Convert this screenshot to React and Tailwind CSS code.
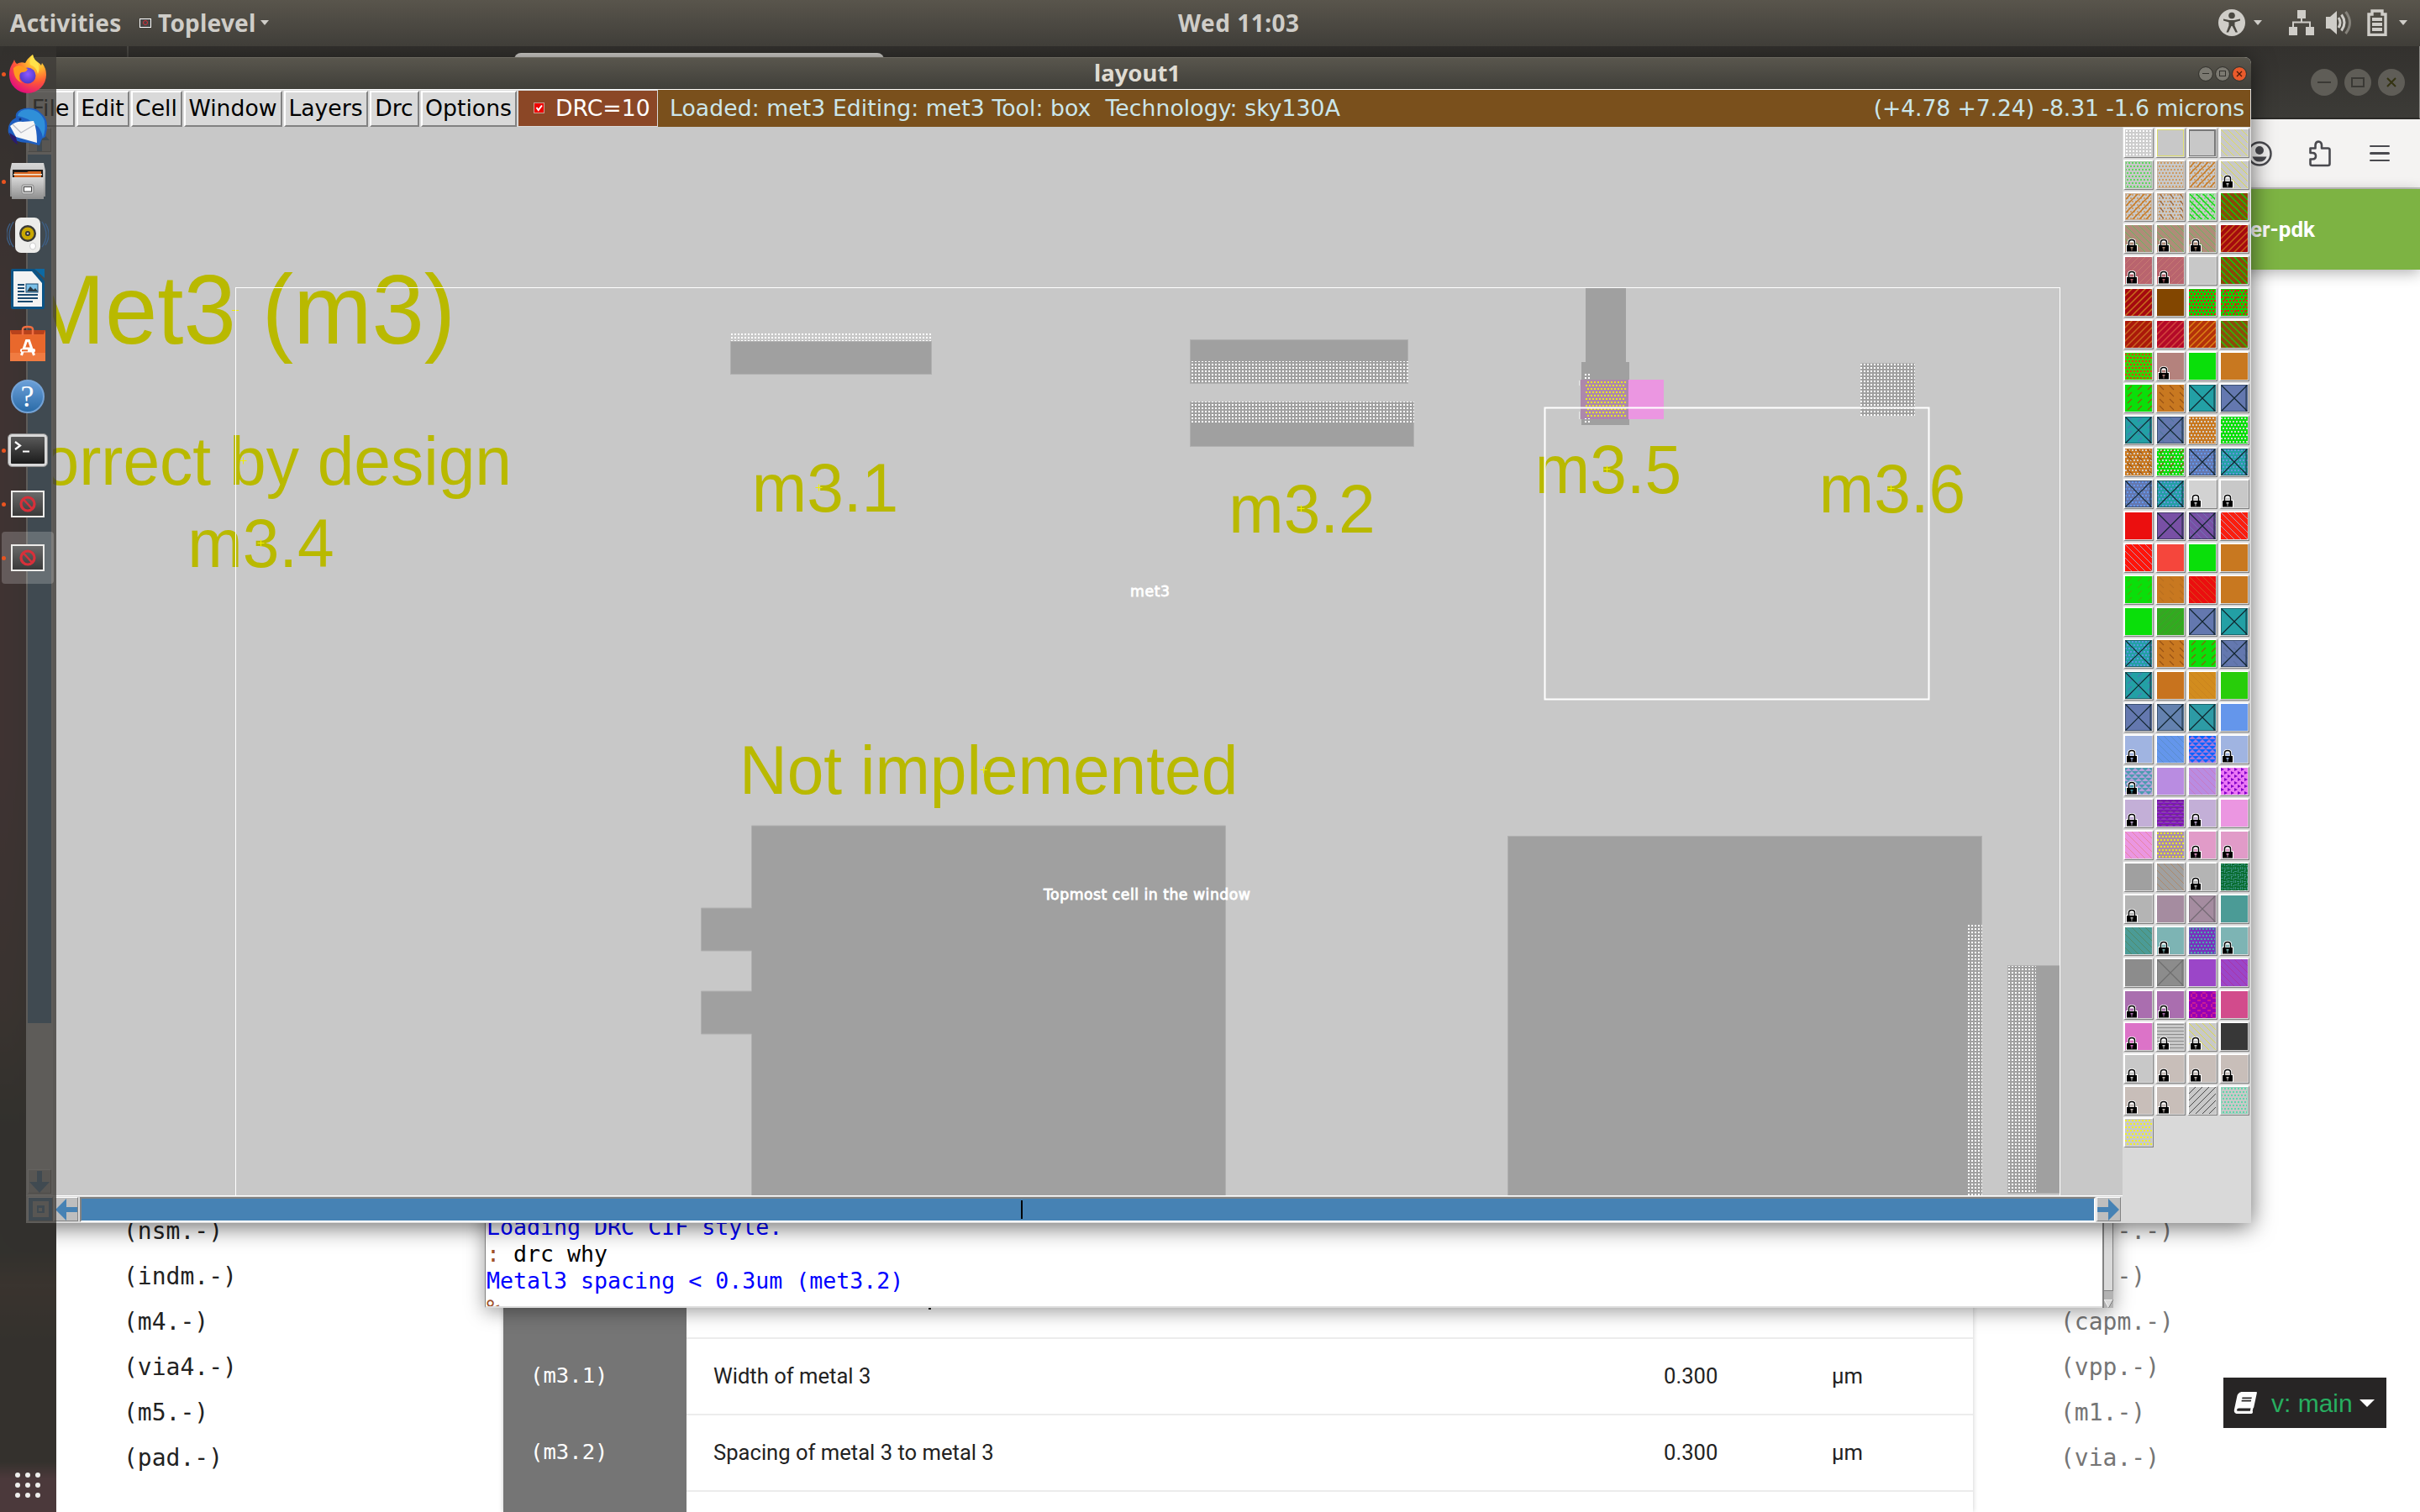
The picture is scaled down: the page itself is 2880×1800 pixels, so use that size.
import React, { useId } from "react";
import { FaBook } from "react-icons/fa";

const G = "#c8c8c8";
const GREEN = "#0adf0a";
const ORANGE = "#c87820";
const TEAL = "#23a0a5";
const SLATE = "#6478af";

/* One palette entry: background colour plus optional stipple layers. */
const s = (bg, layers = [], o = {}) => ({ bg, layers, ...o });
const L = { lock: true };
const X = { cross: "#10242c" };

const PALETTE = [
  s("#cdcdcd", [["grid", "#ffffff"]]),
  s(G, [], { outline: "#dcdc6e" }),
  s(G, [], { outline: "#787878", heavy: true }),
  s(G, [["down", "#e1e14b"]]),

  s(G, [["dots", "#5fd75f"]], { outline: "#a0c8a0" }),
  s(G, [["dots", "#cd9b64"]], { outline: "#c8b4a0" }),
  s(G, [["dots", "#cda06e"], ["up2", ORANGE]], { outline: "#c8b4a0" }),
  s(G, [["down", "#dcdc3c"]], L),

  s(G, [["dots", "#cda06e"], ["up2", ORANGE]], { outline: "#c8b4a0" }),
  s(G, [["dots", "#cd9b64"], ["dashDown", "#96643c"]], { outline: "#c8b4a0" }),
  s(G, [["dots", "#78dc78"], ["down2", GREEN]], { outline: "#a0dca0" }),
  s("#8c460a", [["down2", "#0ad20a"]]),

  s("#af8c78", [["down", "#5fbe5f"]], L),
  s("#af8c78", [["down", "#5fbe5f"]], L),
  s("#af8c78", [["down", "#5fbe5f"]], L),
  s("#a50a0f", [["up2", "#c85f14"]]),

  s("#b9646e", [["up", "#c87d73"]], L),
  s("#b9646e", [["up", "#c87d73"]], L),
  s(G),
  s("#8c460a", [["down2", "#0ad20a"]]),

  s("#a50a0f", [["up2", "#c86e1e"]]),
  s("#824600"),
  s("#14cd0a", [["dots", "#eb1914"]]),
  s("#14cd0a", [["dots", "#eb1914"], ["dashUp", "#a0460a"]]),

  s("#aa190a", [["up2", "#c8641e"]]),
  s("#b40a28", [["up2", "#d2463c"]]),
  s("#b4320a", [["up2", "#dc8214"]]),
  s("#8c4b0a", [["down2", "#28be0a"]]),

  s("#37d20a", [["dots", "#e13c14"]]),
  s("#b4827d", [], L),
  s(GREEN),
  s(ORANGE),

  s(GREEN, [["dashUp", "#8c5a0a"]]),
  s(ORANGE, [["dashDown", "#965014"]]),
  s(TEAL, [], X),
  s(SLATE, [], X),

  s(TEAL, [["dashUp", "#4678b4"]], X),
  s(SLATE, [["dashDown", "#5078a0"]], X),
  s(ORANGE, [["dots", "#d7cdc3"]]),
  s(GREEN, [["dots", "#c8dcc8"]]),

  s(ORANGE, [["dots", "#d7cdc3"], ["dashDown", "#965014"]]),
  s(GREEN, [["dots", "#c8dcc8"], ["dashUp", "#8c5a0a"]]),
  s(SLATE, [["dots", "#6496eb"]], X),
  s(TEAL, [["dots", "#6496dc"]], X),

  s(SLATE, [["dots", "#6496eb"]], X),
  s(TEAL, [["dots", "#6496dc"]], X),
  s("#d2d2d2", [], L),
  s("#c8c8c8", [], L),

  s("#eb0f0f"),
  s("#7850a5", [], X),
  s("#7850a5", [["down", "#6e78b4"]], X),
  s("#fa1e0f", [["down", "#b4aabe"]]),

  s("#ff140a", [["down", "#b4aabe"]]),
  s("#f5463c"),
  s(GREEN),
  s(ORANGE),

  s(GREEN, [["dashUp", "#3cb40a"]]),
  s(ORANGE, [["dashDown", "#b96e1e"]]),
  s("#eb0f0f", [["down", "#d2551e"]]),
  s(ORANGE),

  s(GREEN),
  s("#37a523", [["up", "#1ebe14"]]),
  s(SLATE, [], X),
  s(TEAL, [], X),

  s(TEAL, [["dots", "#5a96e1"]], X),
  s(ORANGE, [["dashDown", "#965014"]]),
  s(GREEN, [["dashUp", "#8c5a0a"]]),
  s(SLATE, [["dashDown", "#5a6ea0"]], X),

  s(TEAL, [["dashUp", "#4678b4"]], X),
  s("#c8731e"),
  s("#d28c1e", [["down", "#c8821e"]]),
  s("#28cd0a"),

  s(SLATE, [], X),
  s("#6482af", [], X),
  s("#2d9ba5", [], X),
  s("#6496eb"),

  s("#a0b4e1", [], L),
  s("#6496eb", [["down", "#5a8cc8"]]),
  s("#0a64ff", [["tri", "#a078dc"]]),
  s("#a0b4e1", [], L),

  s("#4b9baf", [["tri", "#b4a0dc"]], L),
  s("#b98ce1"),
  s("#b98ce1", [["down", "#c878be"]]),
  s("#eb78f5", [["triSide", "#8200c8"]]),

  s("#c3afd7", [], L),
  s("#820ac8", [["tri", "#8c3cb4"], ["lines", "#6e3282"]]),
  s("#c3afd7", [], L),
  s("#eb96e1"),

  s("#eb96e1", [["down", "#e6829b"]]),
  s("#aa8caa", [["dots", "#e6e628"]]),
  s("#e19bc8", [], L),
  s("#e19bc8", [], L),

  s("#a0a0a0"),
  s("#a0a0a0", [["down", "#af8764"]]),
  s("#b4b4b4", [], L),
  s("#0a6e32", [["weave", "#3c9182"]]),

  s("#b4b4b4", [], L),
  s("#a58ca0"),
  s("#a58ca0", [], { cross: "#736973" }),
  s("#4b9b96"),

  s("#4b9b96", [["down", "#508764"]]),
  s("#7db4b4", [], L),
  s("#7832be", [["dots", "#4baaaa"]], { outline: "#6464b4" }),
  s("#7db4b4", [], L),

  s("#8c8c8c"),
  s("#8c8c8c", [], { cross: "#6e6e6e" }),
  s("#9b46c8"),
  s("#9b46c8", [["down", "#aa32a0"]]),

  s("#aa6eaf", [], L),
  s("#aa6eaf", [], L),
  s("#9600b4", [["rings", "#c81e96"]]),
  s("#d24b8c"),

  s("#dc73c8", [], L),
  s(G, [["lines", "#8c8c8c"]], L),
  s(G, [["down", "#dcdc3c"]], L),
  s("#373737"),

  s("#c8c8c8", [], L),
  s("#c8beb9", [], L),
  s("#c8beb9", [], L),
  s("#c8beb9", [], L),

  s("#c8beb9", [], L),
  s("#c8beb9", [], L),
  s(G, [["up", "#3c3c3c"]]),
  s(G, [["dots", "#5fd7aa"]], { outline: "#96d2be" }),

  s(G, [["dots", "#f0f028"]]),
];

const UP = "M-2 2l4-4M0 8l8-8M6 10l4-4";
const DOWN = "M0 0l8 8M-2 6l4 4M6-2l4 4";

const STIPPLES = {
  grid: { w: 4, h: 4, draw: (c) => <rect x="1" y="1" width="2" height="2" fill={c} /> },
  dots: { w: 4, h: 8, draw: (c) => <path d="M0 1h2v2h-2zM2 5h2v2h-2z" fill={c} /> },
  up: { w: 8, h: 8, draw: (c) => <path d={UP} stroke={c} strokeWidth="0.9" /> },
  up2: { w: 8, h: 8, draw: (c) => <path d={UP} stroke={c} strokeWidth="1.5" /> },
  down: { w: 8, h: 8, draw: (c) => <path d={DOWN} stroke={c} strokeWidth="0.9" /> },
  down2: { w: 8, h: 8, draw: (c) => <path d={DOWN} stroke={c} strokeWidth="1.5" /> },
  dashUp: { w: 12, h: 8, draw: (c) => <path d="M3 6l5-5" stroke={c} strokeWidth="1.1" /> },
  dashDown: { w: 12, h: 8, draw: (c) => <path d="M3 1l5 5" stroke={c} strokeWidth="1.1" /> },
  tri: { w: 8, h: 8, draw: (c) => <path d="M0 4l4-4l4 4zM-4 8l4-4l4 4zM4 8l4-4l4 4z" fill={c} /> },
  triSide: { w: 8, h: 8, draw: (c) => <path d="M0 0l4 2l-4 2zM4 4l4 2l-4 2z" fill={c} /> },
  lines: { w: 4, h: 4, draw: (c) => <path d="M0 1.5h4" stroke={c} strokeWidth="1" /> },
  weave: { w: 8, h: 8, draw: (c) => <path d="M0 1h3v1h-3zM4 0h1v3h-1zM6 2h2v1h-2zM1 4h1v3h-1zM3 5h3v1h-3zM7 4h1v3h-1zM4 7h2v1h-2z" fill={c} /> },
  rings: { w: 12, h: 12, draw: (c) => <path d="M4 1h4v2h-4zM2 3h2v4h-2zM8 3h2v4h-2zM4 7h4v2h-4zM0 10h2v2h-2zM10 10h2v2h-2z" fill={c} /> },
};

function Stipple({ kind, color }) {
  const id = useId();
  const p = STIPPLES[kind];
  return (
    <>
      <pattern id={id} width={p.w} height={p.h} patternUnits="userSpaceOnUse">{p.draw(color)}</pattern>
      <rect width="32" height="32" fill={`url(#${id})`} />
    </>
  );
}

function Swatch({ spec }) {
  return (
    <div className="h-9 w-9 border-t-2 border-l-2 border-r border-b border-t-white border-l-white border-r-[#7f7f7f] border-b-[#7f7f7f] bg-[#d9d9d9]">
      <svg width="32" height="32" viewBox="0 0 32 32" className="block" fill="none">
        <rect width="32" height="32" fill={spec.bg} />
        {spec.layers.map(([kind, color], i) => <Stipple key={i} kind={kind} color={color} />)}
        {spec.outline && <rect x="0.5" y="0.5" width="31" height="31" stroke={spec.outline} />}
        {spec.heavy && <path d="M0 1.5h31M30.5 0v32" stroke={spec.outline} />}
        {spec.cross && (
          <>
            <path d="M0 0.5h32M0.5 0v32M31 0v32M0 31.5h32" stroke={spec.cross} strokeOpacity="0.45" />
            <path d="M30 1v31" stroke={spec.cross} strokeOpacity="0.4" strokeWidth="2" />
            <path d="M1 1l30 30M31 1L1 31" stroke={spec.cross} strokeWidth="1.1" />
          </>
        )}
        {spec.lock && (
          <g>
            <path d="M1 32V23h2v-3q0-4 5-4t5 4v3h2v9z" fill="#fff" />
            <path d="M2 31.500V24h12v7.500z" fill="#000" />
            <path d="M4.500 24v-3.500q0-3 3.500-3t3.500 3V24" stroke="#000" strokeWidth="1.5" fill="#fff" />
            <rect x="6" y="20.500" width="4" height="3" fill={spec.bg} />
            <path d="M6.500 26h3v1.500h-1v3h-1v-3h-1z" fill={spec.bg} />
          </g>
        )}
      </svg>
    </div>
  );
}

function Cross({ x, y }) {
  return <path d={`M${x - 4} ${y}h8M${x} ${y - 4}v8`} stroke="#f0f000" />;
}

function Label({ x, y, size = 78.5, anchor = "middle", children }) {
  return (
    <g transform={`translate(${x} ${y}) scale(1 1.04)`}>
      <text fontSize={size} textAnchor={anchor} fill="#b9b900" className="font-['Liberation_Sans',sans-serif]">{children}</text>
    </g>
  );
}

function Metal({ x, y, w, h }) {
  return <rect x={x + 0.5} y={y + 0.5} width={w - 1} height={h - 1} fill="#a0a0a0" stroke="#b0b0b0" />;
}

/* Mask layout drawing, in screen units. */
function LayoutCanvas() {
  return (
    <svg width="2463" height="1272" viewBox="63 151 2463 1272" className="block shrink-0" fill="none">
      <defs>
        <pattern id="err" x="2" y="1" width="4" height="4" patternUnits="userSpaceOnUse">
          <rect width="2" height="2" fill="#fff" />
        </pattern>
        <pattern id="via" x="3" y="2" width="4" height="8" patternUnits="userSpaceOnUse">
          <path d="M0 0h2v2h-2zM2 4h2v2h-2z" fill="#e6e628" />
        </pattern>
      </defs>
      <rect x="63" y="151" width="2463" height="1272" fill="#c8c8c8" />

      <rect x="870" y="396" width="238" height="11" fill="url(#err)" />
      <Metal x={869} y={406} w={240} h={40} />
      <Metal x={1416} y={404} w={260} h={53} />
      <rect x="1417" y="430" width="259" height="26" fill="url(#err)" />
      <Metal x={1416} y={478} w={267} h={54} />
      <rect x="1417" y="478" width="266" height="25" fill="url(#err)" />

      <path d="M1887 343h48v88h4v75h-57v-75h5z" fill="#a0a0a0" />
      <rect x="1938" y="452" width="42" height="47" fill="#eb96e1" />
      <rect x="1881" y="452" width="57" height="47" fill="#ad88ab" />
      <rect x="1887" y="452" width="48" height="46" fill="url(#via)" />
      <rect x="1886" y="445" width="6" height="7" fill="url(#err)" />
      <rect x="1886" y="498" width="6" height="7" fill="url(#err)" />
      <rect x="1879" y="453" width="1" height="6" fill="#e6e6e6" />
      <rect x="1879" y="490" width="1" height="9" fill="#e6e6e6" />

      <Metal x={2214} y={432} w={65} h={63} />
      <rect x="2214" y="432" width="65" height="63" fill="url(#err)" />

      <path d="M894.500 1430V1231h-60v-51h60v-48h-60v-51h60v-98h564v447z" fill="#a0a0a0" stroke="#b0b0b0" />
      <Metal x={1794} y={995} w={565} h={440} />
      <rect x="2342" y="1101" width="17" height="322" fill="url(#err)" />
      <Metal x={2389} y={1149} w={63} h={272} />
      <rect x="2390" y="1150" width="33" height="270" fill="url(#err)" />

      <Label x={542} y={409} size={112} anchor="end">Met3 (m3)</Label>
      <Label x={609} y={577} anchor="end">Correct by design</Label>
      <Label x={310.500} y={675}>m3.4</Label>
      <Label x={982} y={609}>m3.1</Label>
      <Label x={1549.500} y={634}>m3.2</Label>
      <Label x={1914} y={587}>m3.5</Label>
      <Label x={2252} y={610}>m3.6</Label>
      <Label x={880} y={945} anchor="start">Not implemented</Label>

      <path d="M276 369.500h8" stroke="#f0f000" />
      <Cross x={289.500} y={548.500} />
      <Cross x={310.500} y={646.500} />
      <Cross x={974.500} y={580.500} />
      <Cross x={1548.500} y={605.500} />
      <Cross x={1912.500} y={558.500} />
      <Cross x={2250.500} y={581.500} />
      <Cross x={1170.500} y={916.500} />

      <rect x="280.500" y="342.500" width="2171" height="1200" stroke="#fff" />
      <rect x="1838.500" y="485.500" width="457" height="347" stroke="#fff" strokeWidth="2" />

      <g fill="#fff" stroke="#fff" strokeWidth="0.8" fontSize="17.3" className="font-['DejaVu_Sans',sans-serif]">
        <text x="1345" y="710" textLength="47">met3</text>
        <text x="1242" y="1071" textLength="246">Topmost cell in the window</text>
      </g>
    </svg>
  );
}

function Firefox() {
  return (
    <svg width="46" height="46" viewBox="0 0 46 46">
      <defs>
        <radialGradient id="ffa" cx="0.75" cy="0.1" r="1">
          <stop offset="0" stopColor="#fff44f" /><stop offset="0.3" stopColor="#ffb02e" />
          <stop offset="0.6" stopColor="#ff5a36" /><stop offset="0.95" stopColor="#e3107a" />
        </radialGradient>
        <radialGradient id="ffb" cx="0.5" cy="0.4" r="0.6">
          <stop offset="0" stopColor="#9059ff" /><stop offset="1" stopColor="#4b39c8" />
        </radialGradient>
      </defs>
      <path d="M4 12q2-3 3-6q1 4 3 5q5-3 10-1Q23 4 29 0q1 6 6 9q3 2 4 4l1-3q5 6 5 14a22 22 0 0 1-44 0Q1 17 4 12z" fill="url(#ffa)" />
      <circle cx="23" cy="25" r="9.500" fill="url(#ffb)" />
      <path d="M6 16q5-5 10-2l7 3q-1 4-7 4q-3 1-3 4q-1 6 4 9q-11-4-11-18z" fill="#ff9a1f" />
      <path d="M29 0q-5 6-3 12q8 3 9 11q3-6 0-13q-5-4-6-10z" fill="#ffe24a" />
    </svg>
  );
}

function Thunderbird() {
  return (
    <svg width="48" height="48" viewBox="0 0 48 48">
      <path d="M10 12Q8 4 20 1q14-2 20 6q8 6 7 18l-2 10l-4 2l-3 8l-5-1l-8-2Q6 42 1 30Q-1 18 10 12z" fill="#1f5fc0" />
      <path d="M12 10Q14 2 25 2q14 1 19 14q2 10-2 20q-2-12-10-16q-8-8-20-10z" fill="#2f8fd8" />
      <path d="M3 22Q10 16 18 17l13-1q4 10 4 26L10 35z" fill="#f6f6f6" />
      <path d="M6 20l10 10L33 20" fill="none" stroke="#b9bcc4" strokeWidth="1.200" />
      <path d="M2 30q2 10 10 14l-2-9z" fill="#2a1b6e" />
      <circle cx="15" cy="14" r="1.500" fill="#12306b" />
    </svg>
  );
}

function Files() {
  return (
    <svg width="42" height="44" viewBox="0 0 42 44">
      <defs><linearGradient id="fil" x1="0" y1="0" x2="0" y2="1"><stop offset="0" stopColor="#d8d8d8" /><stop offset="1" stopColor="#8e8e8e" /></linearGradient></defs>
      <path d="M2 0h38l2 9v31H0V9z" fill="url(#fil)" />
      <rect x="3" y="8" width="36" height="10" fill="#1f1c1a" />
      <path d="M5 11h15l2-1h15v8H5z" fill="#d9651f" />
      <rect x="4" y="13" width="34" height="1.500" fill="#f3ead8" />
      <rect x="2" y="17" width="38" height="26" fill="url(#fil)" />
      <rect x="14" y="26" width="14" height="11" rx="2" fill="#c9c9c9" stroke="#8a8a8a" />
      <rect x="16.500" y="28.500" width="9" height="5.500" fill="#fff" stroke="#444" />
    </svg>
  );
}

function Rhythmbox() {
  return (
    <svg width="50" height="44" viewBox="0 0 50 44" fill="none">
      <path d="M8 6q-10 16 0 30M4 8q-8 13 0 26M42 6q10 16 0 30M46 8q8 13 0 26" stroke="#3d5f86" strokeWidth="1.400" />
      <rect x="10" y="1" width="30" height="42" rx="7" fill="#ececea" />
      <circle cx="25" cy="20" r="10" fill="#3a3a38" />
      <circle cx="25" cy="20" r="7.500" fill="#c9a800" />
      <circle cx="25" cy="20" r="3" fill="#333" /><circle cx="25" cy="20" r="1.300" fill="#bbb" />
      <ellipse cx="31" cy="35" rx="3.500" ry="4" fill="#fff" stroke="#ccc" />
    </svg>
  );
}

function Writer() {
  return (
    <svg width="40" height="48" viewBox="0 0 40 48" fill="none">
      <path d="M2 0h26l12 15v31q0 2-2 2H2q-2 0-2-2V2q0-2 2-2z" fill="#0b5486" />
      <path d="M28 0h12v11z" fill="#0d69a3" />
      <path d="M3 3h22l12 14v28H3z" fill="#f3f3f3" />
      <path d="M8 19h8M8 23h8M8 27h8M8 31h24M8 35h24M8 39h18" stroke="#1a4a70" strokeWidth="2" />
      <rect x="18" y="18" width="14" height="10" fill="#7cc0e8" stroke="#1a4a70" />
      <path d="M19 27l4-6l4 4l2-2l3 4z" fill="#2b3a44" />
    </svg>
  );
}

function Software() {
  return (
    <svg width="42" height="43" viewBox="0 0 42 43" fill="none">
      <path d="M0 6h42v37H0z" fill="#e9682c" />
      <path d="M0 6h42l-2 5H2z" fill="#b8421c" />
      <path d="M0 33h42v10H0z" fill="#f07b41" />
      <path d="M15 12V5q0-3 6-3t6 3v7" stroke="#ef6d40" strokeWidth="2.500" />
      <path d="M13.500 36L19.500 18.500h3L28.500 36M16 28h10" stroke="#fff" strokeWidth="3" />
      <rect x="12" y="28" width="18" height="4.500" rx="2" fill="#fff" />
      <rect x="14" y="29.300" width="7" height="2" fill="#e9682c" />
    </svg>
  );
}

function Help() {
  return (
    <div className="flex h-10 w-10 items-center justify-center rounded-full border-2 border-[#74a3d6] bg-gradient-to-b from-[#6a9fd8] to-[#2a6ca8] font-['Liberation_Serif',serif] text-[36px] leading-none text-white">?</div>
  );
}

function TerminalIcon() {
  return (
    <div className="flex h-[38px] w-[46px] rounded-sm border-[3px] border-[#d8d8d8] bg-gradient-to-b from-[#5a5a5a] to-[#1c1c1c] outline outline-[#8d8d8d]">
      <svg width="40" height="30" viewBox="0 0 40 30" fill="none">
        <path d="M5 6l6 4.500l-6 4.500M14 17.500h8" stroke="#fff" strokeWidth="2.200" />
      </svg>
    </div>
  );
}

function Forbidden() {
  return (
    <div className="flex h-8 w-10 items-center justify-center border-2 border-[#ecebe9] bg-gradient-to-b from-[#6a6a6a] to-[#3a3a3a]">
      <svg width="20" height="20" viewBox="0 0 20 20" fill="none">
        <circle cx="10" cy="10" r="8" stroke="#d8303a" strokeWidth="3.200" />
        <path d="M5 4.500l10 11" stroke="#d8303a" strokeWidth="2.600" />
      </svg>
    </div>
  );
}

const DOCK = [
  { icon: <Firefox />, running: true },
  { icon: <Thunderbird /> },
  { icon: <Files />, running: true },
  { icon: <Rhythmbox /> },
  { icon: <Writer /> },
  { icon: <Software /> },
  { icon: <Help /> },
  { icon: <TerminalIcon />, running: true },
  { icon: <Forbidden />, running: true },
  { icon: <Forbidden />, running: true, active: true },
];

function Dock() {
  return (
    <aside className="absolute top-[55px] left-0 flex h-[1745px] w-[67px] flex-col bg-[#3e3c38]/80 pt-px">
      {DOCK.map((d, i) => (
        <div key={i} className="relative flex h-16 w-full items-center justify-center">
          {d.active && <div className="absolute inset-x-0.5 inset-y-px right-[3px] rounded bg-white/20" />}
          {d.running && <div className="absolute left-0.5 h-[5px] w-[5px] rounded-full bg-[#e95420]" />}
          <div className="relative right-px">{d.icon}</div>
        </div>
      ))}
      <div className="mt-auto mb-[17px] ml-[18px] grid w-[30px] grid-cols-3 gap-[6px]">
        {Array.from({ length: 9 }, (_, i) => <div key={i} className="h-1.5 w-1.5 rounded-full bg-[#eeeeec]" />)}
      </div>
    </aside>
  );
}

function Caret() {
  return <svg width="10" height="6" viewBox="0 0 10 6"><path d="M0 0h10l-5 6z" fill="#cfcdc8" /></svg>;
}

function TopBar() {
  return (
    <header className="absolute inset-x-0 top-0 flex h-[55px] items-center bg-gradient-to-b from-[#59554c] to-[#403e39] pb-px font-['Noto_Sans',sans-serif] text-[28px] leading-[52px] font-bold text-[#cfcdc8]">
      <span className="ml-3 w-[154px] pb-px tracking-[0.25px]">Activities</span>
      <div className="flex h-[11px] w-[14px] items-center justify-center border border-white bg-[#444]">
        <div className="h-1.5 w-1.5 rounded-full border border-[#d8303a]" />
      </div>
      <span className="ml-2 pb-px tracking-[0.2px]">Toplevel</span>
      <div className="ml-[5px]"><Caret /></div>
      <span className="absolute left-[1402px] pb-px tracking-[0.5px]">Wed 11:03</span>
      <div className="mr-[15px] ml-auto flex items-center">
        <svg width="32" height="32" viewBox="0 0 32 32">
          <circle cx="16" cy="16" r="16" fill="#cfcdc8" />
          <circle cx="16" cy="7.500" r="3.800" fill="#4a4841" />
          <path d="M6 11.500l7 1.500h6l7-1.500v2l-6.500 2v4l3.500 8h-2.500L16.500 20h-1L12 27.500H9.500l3-8v-4L6 13.500z" fill="#4a4841" />
        </svg>
        <div className="ml-[10px]"><Caret /></div>
        <svg width="30" height="32" viewBox="0 0 30 32" className="ml-8" fill="none">
          <path d="M10 1h10v10H10zM0 21h10v10H0zM20 21h10v10H20z" fill="#cfcdc8" />
          <path d="M15 10v5M5 21v-5.500h20V21" stroke="#cfcdc8" strokeWidth="2" />
        </svg>
        <svg width="31" height="30" viewBox="0 0 31 30" className="ml-[14px]" fill="none">
          <path d="M0 8h5l8-7v28l-8-7H0z" fill="#cfcdc8" />
          <path d="M15 9q4 6 0 12M18.500 5.500q7 9.500 0 19" stroke="#cfcdc8" strokeWidth="3" />
          <path d="M23.500 2q10 13 0 26" stroke="#85827b" strokeWidth="3" />
        </svg>
        <svg width="24" height="32" viewBox="0 0 24 32" className="ml-[18px]" fill="none">
          <path d="M2 30.500V6h4V2h12v4h4v24.500z" stroke="#cfcdc8" strokeWidth="3.400" />
          <path d="M6 12h12M6 18h12M6 24h12" stroke="#cfcdc8" strokeWidth="4" />
        </svg>
        <div className="ml-[14px]"><Caret /></div>
      </div>
    </header>
  );
}

const LEFT_NAV = ["(nsm.-)", "(indm.-)", "(m4.-)", "(via4.-)", "(m5.-)", "(pad.-)"];
const RIGHT_NAV = ["    -.-)", "    -)", "(capm.-)", "(vpp.-)", "(m1.-)", "(via.-)"];

function TableRow({ code, text, value, unit }) {
  return (
    <div className="flex h-[91px] shrink-0">
      <div className="flex w-[218px] items-center bg-[#757575] pb-[5px] pl-8 font-['DejaVu_Sans_Mono',monospace] text-[25.6px] text-white">{code}</div>
      <div className="flex flex-1 items-center border-b-2 border-[#ececec] pl-8 font-['Roboto',sans-serif] text-[25.6px] text-[#222]">
        <span className="w-[1131px]">{text}</span>
        <span className="w-[200px]">{value}</span>
        <span>{unit}</span>
      </div>
    </div>
  );
}

const ROUND = "flex h-8 w-8 items-center justify-center rounded-full bg-[#5f5d57]";

function Browser() {
  return (
    <section className="absolute top-[55px] left-[67px] isolate flex h-[1745px] w-[2813px] flex-col bg-white">
      <div className="flex h-[87px] shrink-0 border-r border-b-2 border-r-[#8a8985] border-b-[#2c2b28] bg-gradient-to-b from-[#33312e] to-[#3c3b37]">
        <div className="h-full w-[86px] border-r-2 border-[#4b4945]" />
        <div className="mt-2 ml-[459px] h-[60px] w-[440px] rounded-t-lg bg-[#d6d4d0]" />
        <div className="mr-[17px] ml-auto flex items-center gap-2">
          <div className={ROUND}><div className="h-0.5 w-4 bg-[#3a3935]" /></div>
          <div className={ROUND}><div className="h-3 w-4 border-2 border-[#3a3935]" /></div>
          <div className={ROUND}>
            <svg width="12" height="12" viewBox="0 0 12 12"><path d="M1 1l10 10M11 1L1 11" stroke="#343312" strokeWidth="2" /></svg>
          </div>
        </div>
      </div>
      <div className="flex h-[83px] shrink-0 items-center justify-end border-b-2 border-[#c4c3c2] bg-[#f4f3f2] pr-9">
        <svg width="30" height="30" viewBox="0 0 30 30" fill="none">
          <circle cx="15" cy="15" r="13.500" stroke="#4a4a4f" strokeWidth="2.500" />
          <circle cx="15" cy="11" r="5" fill="#4a4a4f" />
          <path d="M6.500 18.500h17q-2 6-8.500 6t-8.500-6z" fill="#4a4a4f" />
        </svg>
        <svg width="28" height="32" viewBox="0 0 28 32" className="ml-[43px]" fill="none">
          <path d="M2.500 9.500h6V6q0-4 3.500-4.500Q16 2 16 6v3.500h7.500q2 0 2 2V28q0 2-2 2h-19q-2 0-2-2v-5.500h2.500q4 0 4-3.700t-4-3.800H2.500z" stroke="#4a4a4f" strokeWidth="2.600" strokeLinejoin="round" />
        </svg>
        <div className="ml-[45px] flex w-6 flex-col gap-[6px]">
          <div className="h-[2.500px] rounded bg-[#4a4a4f]" /><div className="h-[2.500px] rounded bg-[#4a4a4f]" /><div className="h-[2.500px] rounded bg-[#4a4a4f]" />
        </div>
      </div>
      <div className="z-10 flex h-24 shrink-0 items-center justify-end bg-[#7db343] pr-[125px] font-['Roboto',sans-serif] text-[26px] font-bold text-white shadow-[0_4px_16px_rgba(0,0,0,0.3)]">
        skywater-pdk
      </div>
      <div className="flex min-h-0 flex-1">
        <ul className="flex w-[532px] flex-col justify-end pb-[37px] pl-20 font-['DejaVu_Sans_Mono',monospace] text-[28px] text-[#222]">
          {LEFT_NAV.map((t) => <li key={t} className="h-[54px] leading-[54px]">{t}</li>)}
        </ul>
        <div className="flex w-[1749px] flex-col justify-end shadow-[0_0_6px_rgba(0,0,0,0.2)]">
          <div className="flex h-[91px] shrink-0">
            <div className="w-[218px] bg-[#757575]" />
            <div className="flex flex-1 items-end border-b-2 border-[#ececec] pb-[33px] pl-[288px]"><div className="h-1 w-[3px] bg-[#222]" /></div>
          </div>
          <TableRow code="(m3.1)" text="Width of metal 3" value="0.300" unit="µm" />
          <TableRow code="(m3.2)" text="Spacing of metal 3 to metal 3" value="0.300" unit="µm" />
          <div className="h-6 w-[218px] shrink-0 bg-[#757575]" />
        </div>
        <ul className="flex flex-1 flex-col justify-end pb-[37px] pl-[104px] font-['DejaVu_Sans_Mono',monospace] text-[28px] whitespace-pre text-[#757575]">
          {RIGHT_NAV.map((t) => <li key={t} className="h-[54px] leading-[54px]">{t}</li>)}
        </ul>
      </div>
      <div className="absolute right-10 bottom-[100px] flex h-[60px] w-[194px] items-center bg-[#272525] pl-3 font-['Liberation_Sans',sans-serif] text-[30px] text-[#27ae60]">
        <FaBook className="h-[26px] w-[28px] -skew-x-12 text-[#fcfcfc]" />
        <span className="ml-[17px]">v: main</span>
        <svg width="18" height="9" viewBox="0 0 18 9" className="ml-2"><path d="M0 0h18l-9 9z" fill="#fff" /></svg>
      </div>
    </section>
  );
}

function Console() {
  return (
    <section className="absolute top-[1180px] left-[577px] flex h-[377px] w-[1938px] shadow-[0_4px_22px_rgba(0,0,0,0.4)]">
      <div className="flex flex-1 flex-col overflow-hidden border-b-2 border-l border-b-[#dcdcdc] border-l-[#828282] bg-white pt-[265px] pl-px font-['DejaVu_Sans_Mono',monospace] text-[26.6px] leading-[32px] whitespace-pre text-[#0000ff]">
        <div className="h-8 shrink-0">Loading DRC CIF style.</div>
        <div className="h-8 shrink-0 text-black"><span className="text-[#a0522d]">:</span> drc why</div>
        <div className="h-8 shrink-0">Metal3 spacing &lt; 0.3um (met3.2)</div>
        <div className="h-8 shrink-0 text-[#a0522d]">%</div>
      </div>
      <div className="flex w-[13px] flex-col border-l-2 border-[#828282] bg-[#b3b3b3]">
        <div className="h-[357px] border-r border-b border-[#828282] bg-[#d9d9d9]" />
        <svg width="11" height="10" viewBox="0 0 11 10" className="mt-auto">
          <path d="M0 0h11L5.500 10z" fill="#d9d9d9" stroke="#fff" strokeWidth="0.800" /><path d="M11 0L5.500 10" stroke="#707070" />
        </svg>
      </div>
    </section>
  );
}

const MENUS = [
  ["File", "w-[57px]"], ["Edit", "w-[63px]"], ["Cell", "w-[61px]"], ["Window", "w-[117px]"],
  ["Layers", "w-[100px]"], ["Drc", "w-[59px]"], ["Options", "w-[114px]"],
];

const RAISED = "border border-t-white border-l-white border-r-[#828282] border-b-[#828282]";

function LayoutWindow() {
  return (
    <section className="absolute top-[68px] left-[31px] flex h-[1388px] w-[2648px] flex-col overflow-hidden rounded-t-lg bg-[#d9d9d9] font-['DejaVu_Sans',sans-serif] text-[26.67px] shadow-[0_4px_28px_rgba(0,0,0,0.6)]">
      <div className="relative flex h-[38px] shrink-0 items-center justify-end gap-1 border-t border-[#6b685f] bg-gradient-to-b from-[#59564d] to-[#403f3a] pr-1.5">
        <span className="absolute left-[1271px] pb-0.5 font-['Noto_Sans',sans-serif] text-[27.5px] leading-[36px] font-bold text-[#dfdbd2]">layout1</span>
        <div className="flex h-4 w-4 items-center justify-center rounded-full bg-[#7b7971] outline outline-[#35342f]"><div className="h-px w-2 bg-[#33322e]" /></div>
        <div className="flex h-4 w-4 items-center justify-center rounded-full bg-[#7b7971] outline outline-[#35342f]"><div className="h-[7px] w-2 border border-[#33322e]" /></div>
        <div className="flex h-4 w-4 items-center justify-center rounded-full bg-[#ea5a2b] outline outline-[#35342f]">
          <svg width="8" height="8" viewBox="0 0 8 8"><path d="M1 1l6 6M7 1L1 7" stroke="#4c1a08" strokeWidth="1.300" /></svg>
        </div>
      </div>
      <div className="flex h-[45px] shrink-0 border-t border-white pr-px pl-px">
        <div className="flex gap-0.5 pt-px">
          {MENUS.map(([name, w]) => (
            <div key={name} className={`${w} flex h-[43px] items-center justify-center border-t-2 border-r-2 border-b-2 border-l-2 border-t-white border-r-[#828282] border-b-[#828282] border-l-white pr-px pb-px text-black`}>{name}</div>
          ))}
        </div>
        <div className="mt-px mb-px ml-0.5 flex w-[165px] items-center bg-[#8b4726] pb-px pl-[19px] text-white">
          <div className="h-[11px] w-[11px] bg-[#ee0000] outline outline-[#c9a090]">
            <svg width="11" height="11" viewBox="0 0 11 11" fill="none"><path d="M2.500 5l2.200 3L9 2.500" stroke="#fff" strokeWidth="2" /></svg>
          </div>
          <span className="ml-[14px]">DRC=10</span>
        </div>
        <div className="ml-px flex flex-1 items-center justify-between bg-[#7a501c] pr-[7px] pb-px pl-[14px] whitespace-pre text-[#cbe6ea]">
          <span className="tracking-[0.07px]">Loaded: met3 Editing: met3 Tool: box  Technology: sky130A</span>
          <span className="tracking-[-0.1px]">(+4.78 +7.24) -8.31 -1.6 microns</span>
        </div>
      </div>
      <div className="flex min-h-0 flex-1">
        <div className="flex w-[2495px] flex-col">
          <div className="flex h-[1272px]">
            <div className="flex w-8 flex-col pt-px pl-0.5">
              <div className={`${RAISED} flex h-[29px] w-7 items-center justify-center bg-[#bebebe]`}>
                <svg width="24" height="26" viewBox="0 0 24 26"><path d="M12 0l12 13h-9v13H9V13H0z" fill="#4682b4" /></svg>
              </div>
              <div className="mt-[3px] h-[1208px] w-7 bg-[#d9d9d9]"><div className="h-[1034px] w-7 bg-[#4682b4]" /></div>
              <div className={`${RAISED} flex h-[29px] w-7 items-center justify-center bg-[#bebebe]`}>
                <svg width="24" height="26" viewBox="0 0 24 26"><path d="M12 26l12-13h-9V0H9v13H0z" fill="#4682b4" /></svg>
              </div>
            </div>
            <LayoutCanvas />
          </div>
          <div className="flex h-[33px] items-center border-t border-white pb-px pl-0.5">
            <div className={`${RAISED} flex h-[29px] w-[30px] items-center justify-center bg-[#4682b4]`}>
              <div className="flex h-[19px] w-[19px] items-center justify-center border-[5px] border-[#bebebe]"><div className="h-1 w-1 bg-[#bebebe]" /></div>
            </div>
            <div className={`${RAISED} ml-px flex h-[29px] w-[29px] items-center justify-end bg-[#bebebe]`}>
              <svg width="26" height="26" viewBox="0 0 26 26"><path d="M0 13L13 0v10h13v6H13v10z" fill="#4682b4" /></svg>
            </div>
            <div className="ml-0.5 flex h-[30px] w-[2399px] items-center border-2 border-t-[#828282] border-r-white border-b-white border-l-[#828282] bg-[#4682b4]">
              <div className="ml-[1118px] h-[22px] w-0.5 bg-black" />
            </div>
            <div className={`${RAISED} ml-[1px] flex h-[29px] w-[29px] items-center bg-[#bebebe]`}>
              <svg width="26" height="26" viewBox="0 0 26 26"><path d="M26 13L13 0v10H0v6h13v10z" fill="#4682b4" /></svg>
            </div>
          </div>
        </div>
        <div className="grid w-[153px] grid-cols-[repeat(4,36px)] content-start gap-0.5 pt-px pl-px">
          {PALETTE.map((p, i) => <Swatch key={i} spec={p} />)}
        </div>
      </div>
    </section>
  );
}

export default function App() {
  return (
    <main className="relative h-[1800px] w-[2880px] overflow-hidden bg-[linear-gradient(180deg,#050505_60px,#41141e_400px,#41141e_900px,#281410_1200px,#020500_1340px,#020500_1490px,#28140a_1530px,#0a0800_1600px,#0a0800_1740px,#7d2d46_1760px,#7d2d46_1800px)]">
      <Browser />
      <Console />
      <LayoutWindow />
      <Dock />
      <TopBar />
    </main>
  );
}
